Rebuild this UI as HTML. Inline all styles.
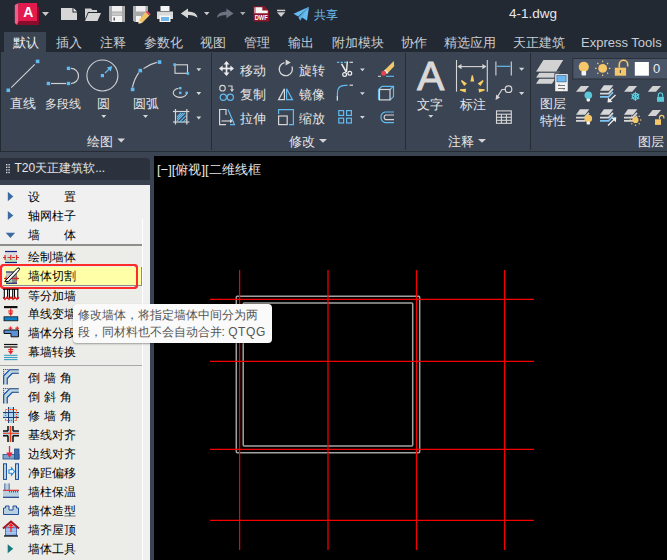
<!DOCTYPE html>
<html><head><meta charset="utf-8">
<style>
html,body{margin:0;padding:0}
body{width:667px;height:560px;overflow:hidden;position:relative;background:#222933;font-family:"Liberation Sans",sans-serif;}
.a{position:absolute}
.t{position:absolute;white-space:nowrap;line-height:1}
svg{position:absolute;overflow:visible}
.tab{position:absolute;top:36px;font-size:13px;color:#c8ccd2;line-height:1;white-space:nowrap}
.lbl{position:absolute;font-size:12.5px;color:#e6e6e6;line-height:1;white-space:nowrap}
.pl{position:absolute;font-size:12px;color:#000;font-weight:500;line-height:1;white-space:nowrap;left:28px}
.tri{position:absolute;width:0;height:0;border-left:2.5px solid transparent;border-right:2.5px solid transparent;border-top:3px solid #d0d3d8}
</style></head><body>

<!-- ===== TITLE BAR ===== -->
<div id="title">
<svg width="667" height="30" style="left:0;top:0">
 <!-- logo -->
 <rect x="17" y="7" width="22" height="18" fill="#8a0c2c"/>
 <polygon points="14.8,5 18.5,3 18.5,21 17,25 14.8,23" fill="#ef5f88"/>
 <rect x="18.5" y="3" width="18.5" height="18" fill="#e31a4d"/>
 <text x="28.2" y="17" font-family="Liberation Sans" font-weight="bold" font-size="14" fill="#fff" text-anchor="middle">A</text>
 <polygon points="42,12 49,12 45.5,16" fill="#c9c9c9"/>
 <!-- new -->
 <polygon points="61,8 72.5,8 72.5,12.5 77,12.5 77,20 61,20" fill="#d6d6d6"/>
 <polygon points="73.5,8 77,11.5 73.5,11.5" fill="#f2f2f2"/>
 <!-- open -->
 <polygon points="85,8.5 91,8.5 92.5,10 97,10 97,12 88,12 85,19" fill="#d0d0d0"/>
 <polygon points="88.5,13 101,13 97.5,21 85,21" fill="#d6d6d6"/>
 <!-- save -->
 <polygon points="109,6 125,6 125,22 110.5,22 109,20.5" fill="#a9a9a9"/>
 <rect x="112" y="6" width="10" height="5.5" fill="#efefef"/>
 <rect x="112" y="12.5" width="10" height="3" fill="#c9c9c9"/>
 <rect x="112" y="16" width="10" height="6" fill="#f5f5f5"/>
 <rect x="113.5" y="17.5" width="1.5" height="3" fill="#555"/>
 <!-- saveas -->
 <polygon points="133,6 148,6 148,13 141,22 134.5,22 133,20.5" fill="#a9a9a9"/>
 <rect x="136" y="6" width="9.5" height="5.5" fill="#efefef"/>
 <rect x="136" y="16" width="5" height="6" fill="#f5f5f5"/>
 <polygon points="145.5,12 149.5,15.5 142,23 138.5,23.5 139,20" fill="#f0c466"/>
 <polygon points="145.5,12 147,10.7 150.7,14.2 149.5,15.5" fill="#e84a5f"/>
 <polygon points="139,20 138.5,23.5 141.5,23" fill="#eee"/>
 <!-- print -->
 <rect x="160.5" y="6" width="9" height="5" fill="#f5f5f5"/>
 <rect x="157" y="11.5" width="16" height="7.5" fill="#d9d9d9"/>
 <rect x="159.5" y="15.5" width="11" height="6.5" fill="#f7f7f7"/>
 <rect x="161" y="17" width="8" height="4" fill="#73b6ea"/>
 <!-- undo -->
 <path d="M180.8,13.4 L188,8.6 L188,11.4 Q196.5,11.4 197.6,17.8 Q194.5,14.9 188,14.9 L188,18.2 Z" fill="#d6d6d6"/>
 <polygon points="204,12 209.5,12 206.75,15.2" fill="#c9c9c9"/>
 <!-- redo -->
 <path d="M233.6,13.4 L226.4,8.6 L226.4,11.4 Q217.9,11.4 216.8,17.8 Q219.9,14.9 226.4,14.9 L226.4,18.2 Z" fill="#6b7280"/>
 <polygon points="240,12 245.5,12 242.75,15.2" fill="#a9adb3"/>
 <!-- dwf -->
 <polygon points="253.5,6.3 264.5,6.3 269,10.8 269,21.6 253.5,21.6" fill="#8a1628"/>
 <polygon points="255.8,7.3 262.3,7.3 262.3,10.6 267.7,10.6 267.7,13.3 255.8,13.3" fill="#f6f6f6"/>
 <rect x="254.2" y="7.3" width="1.6" height="6" fill="#e8a0b0"/>
 <text x="261.2" y="19.8" font-family="Liberation Sans" font-weight="bold" font-size="7.6" fill="#fff" text-anchor="middle" textLength="13" lengthAdjust="spacingAndGlyphs">DWF</text>
 <!-- customize -->
 <rect x="277" y="9.7" width="8.2" height="1.5" fill="#cfcfcf"/>
 <polygon points="277,12.3 285.2,12.3 281.1,16.9" fill="#cfcfcf"/>
 <!-- plane -->
 <polygon points="293.5,13.8 309,6.8 298.2,16.6" fill="#66bcf2"/>
 <polygon points="300.6,16.4 309,6.8 307,20.8" fill="#66bcf2"/>
 <polygon points="298.4,17.2 308,7.6 300.2,20.8" fill="#5aaee6"/>
</svg>
<div class="t" style="left:314px;top:9px;font-size:12px;color:#6cbef2">共享</div>
<div class="t" style="left:509px;top:7px;font-size:13.5px;color:#e8e8e8">4-1.dwg</div>
</div>

<!-- ===== TABS ===== -->
<div class="a" style="left:4px;top:32px;width:42px;height:20px;background:#3b4453"></div>
<div class="tab" style="left:13px;color:#eef0f2">默认</div>
<div class="tab" style="left:56px">插入</div>
<div class="tab" style="left:100px">注释</div>
<div class="tab" style="left:144px">参数化</div>
<div class="tab" style="left:200px">视图</div>
<div class="tab" style="left:244px">管理</div>
<div class="tab" style="left:288px">输出</div>
<div class="tab" style="left:332px">附加模块</div>
<div class="tab" style="left:400.5px">协作</div>
<div class="tab" style="left:444px">精选应用</div>
<div class="tab" style="left:513px">天正建筑</div>
<div class="tab" style="left:581px">Express Tools</div>

<!-- ===== RIBBON ===== -->
<div class="a" style="left:1px;top:52px;width:666px;height:104px;background:#3b4453"></div>
<div class="a" style="left:1px;top:151px;width:666px;height:1px;background:#262c36"></div>
<div class="a" style="left:211px;top:53px;width:1px;height:97px;background:#262c36"></div>
<div class="a" style="left:405px;top:53px;width:1px;height:97px;background:#262c36"></div>
<div class="a" style="left:530px;top:53px;width:1px;height:97px;background:#262c36"></div>

<div id="ribbon">
<svg width="667" height="160" style="left:0;top:0" fill="none">
 <g stroke="#cfd1d4" stroke-width="1.2">
  <line x1="11.2" y1="87.6" x2="34.8" y2="64.3" stroke-width="1.1"/>
  <line x1="51" y1="83.5" x2="66" y2="83.5"/>
  <path d="M71,68.4 A7.55,7.55 0 0 1 71,83.5"/>
  <circle cx="102.4" cy="75.5" r="15.5" stroke-width="1.1"/>
  <path d="M132.4,87.3 Q134.5,78.5 138.8,72.6" /><path d="M143.5,68.6 Q149,64.2 156.8,62.3"/>
 </g>
 <g fill="#62bbf0">
  <rect x="6.5" y="88.5" width="3.6" height="3.6"/>
  <rect x="35.8" y="59.6" width="3.6" height="3.6"/>
  <rect x="46.7" y="81.8" width="3.4" height="3.4"/>
  <rect x="66.8" y="81.8" width="3.4" height="3.4"/>
  <rect x="66.8" y="66.7" width="3.4" height="3.4"/>
  <rect x="100.8" y="74" width="3.2" height="3.2"/>
  <rect x="130.8" y="87.6" width="3.6" height="3.6"/>
  <rect x="138.5" y="68.8" width="3.6" height="3.6"/>
  <rect x="157.7" y="60.3" width="3.6" height="3.6"/>
 </g>
 <line x1="105" y1="73" x2="109.6" y2="68.6" stroke="#62bbf0" stroke-width="1.3"/>
 <polygon points="112.4,66 106.8,67.6 110.7,71.5" fill="#62bbf0"/>
 <!-- small draw icons -->
 <rect x="175" y="64.8" width="12.5" height="8.5" stroke="#d6d6d6" stroke-width="1.1"/>
 <rect x="173.3" y="63.3" width="2.6" height="2.6" fill="#62bbf0"/>
 <rect x="186.6" y="72.2" width="2.6" height="2.6" fill="#62bbf0"/>
 <path d="M178.5,88.3 A6.8,4.6 0 1 0 186.8,92.3" fill="none" stroke="#d6d6d6" stroke-width="1.1"/>
 <rect x="179" y="86.9" width="2.5" height="2.5" fill="#62bbf0"/>
 <rect x="179" y="91.6" width="2.5" height="2.5" fill="#62bbf0"/>
 <rect x="185.4" y="91.6" width="2.5" height="2.5" fill="#62bbf0"/>
 <g stroke="#d6d6d6" stroke-width="1.2">
  <line x1="173" y1="111.5" x2="189.3" y2="111.5"/>
  <line x1="173" y1="122" x2="189.3" y2="122"/>
  <line x1="175.5" y1="109" x2="175.5" y2="124.5"/>
  <line x1="186.8" y1="109" x2="186.8" y2="124.5"/>
 </g>
 <g stroke="#62bbf0" stroke-width="1.1"><line x1="177" y1="117" x2="181" y2="113"/><line x1="177" y1="121" x2="185" y2="113"/><line x1="179" y1="122.6" x2="186" y2="115.6"/><line x1="182.5" y1="122.6" x2="186" y2="119.1"/><line x1="177" y1="119" x2="183" y2="113"/></g>
 <g fill="#d3d5d8">
  <polygon points="196.4,68.2 201.2,68.2 198.8,71.2"/>
  <polygon points="196.4,92 201.2,92 198.8,95"/>
  <polygon points="196.4,116.4 201.2,116.4 198.8,119.4"/>
  <polygon points="101.3,115 106.3,115 103.8,118"/>
  <polygon points="143,115 148,115 145.5,118"/>
  <polygon points="117.4,138.6 125,138.6 121.2,142.4"/>
  <polygon points="360,68.5 364.8,68.5 362.4,71.3"/>
  <polygon points="360,92.2 364.8,92.2 362.4,95"/>
  <polygon points="360,116 364.8,116 362.4,118.8"/>
  <polygon points="319,139 327,139 323,142.8"/>
  <polygon points="428.3,115 433.3,115 430.8,117.8"/>
  <polygon points="519,67.8 524.3,67.8 521.6,70.8"/>
  <polygon points="519,91.9 524.3,91.9 521.6,94.9"/>
  <polygon points="478,139 486,139 482,142.8"/>
 </g>
 <!-- modify icons -->
 <g stroke="#ececec" stroke-width="1.7"><line x1="222" y1="68.5" x2="231" y2="68.5"/><line x1="226.5" y1="64" x2="226.5" y2="73"/></g>
 <g fill="#ececec">
  <polygon points="226.5,61 229.5,64.6 223.5,64.6"/><polygon points="226.5,76 229.5,72.4 223.5,72.4"/>
  <polygon points="219,68.5 222.6,65.5 222.6,71.5"/><polygon points="234,68.5 230.4,65.5 230.4,71.5"/>
 </g>
 <circle cx="222.5" cy="88.2" r="2.8" fill="none" stroke="#d6d6d6" stroke-width="1.1"/>
 <path d="M228,86 L232,86 L232,89.5" fill="none" stroke="#d6d6d6" stroke-width="1.2"/>
 <polygon points="229.9,89.2 234.1,89.2 232,92" fill="#d6d6d6"/>
 <g stroke="#62bbf0" stroke-width="1.2" fill="none"><circle cx="223.3" cy="97.3" r="3.1"/><circle cx="230.3" cy="97.3" r="3.1"/></g>
 <g stroke="#d6d6d6" stroke-width="1.2">
  <polyline points="226,124.6 219.6,124.6 219.6,109.5 226,109.5 226,115"/>
  <line x1="221.5" y1="121" x2="230" y2="121"/>
 </g>
 <polygon points="230,118.8 233,121 230,123.2" fill="#d6d6d6"/>
 <polyline points="228,109.5 234.5,124.6 230,124.6" stroke="#62bbf0" stroke-width="1.2"/>
 <path d="M284.5,62.6 A6.6,6.6 0 1 0 291.9,66.5" fill="none" stroke="#d6d6d6" stroke-width="1.3"/>
 <polygon points="290.8,62.6 285.6,59.6 285.6,65.6" fill="#d6d6d6"/>
 <polygon points="278.6,99.6 284.4,88.8 284.4,99.6" stroke="#d6d6d6" stroke-width="1.2" stroke-linejoin="miter"/>
 <polygon points="286.6,88.8 292.5,99.6 286.6,99.6" stroke="#62bbf0" stroke-width="1.2"/>
 <rect x="278.6" y="116" width="8.6" height="8.6" stroke="#d6d6d6" stroke-width="1.2"/>
 <polyline points="278.6,114 278.6,109.6 293.4,109.6 293.4,124.6 289,124.6" stroke="#62bbf0" stroke-width="1.2"/>
 <!-- trim -->
 <line x1="337" y1="62.3" x2="348" y2="62.3" stroke="#62bbf0" stroke-width="1.2" stroke-dasharray="2.2,1.4"/>
 <line x1="349.5" y1="62.3" x2="353" y2="62.3" stroke="#d6d6d6" stroke-width="1.2"/>
 <g fill="#eeeeee"><polygon points="340.8,64 342.3,63.6 347,71.8 345.6,72.6"/><polygon points="346.6,61.5 348,61.5 347.2,72 345.8,72"/></g>
 <g stroke="#eeeeee" stroke-width="1.2" fill="none"><circle cx="344.6" cy="74.5" r="1.9"/><circle cx="349.8" cy="73.3" r="1.9"/></g>
 <!-- erase -->
 <polygon points="384.5,70.3 393.8,61 394.2,66.2 387.5,73.3" fill="#f2c86c"/>
 <polygon points="383.8,71 385.2,69.6 388.3,72.7 386.9,74" fill="#f4f4f4"/>
 <circle cx="383.7" cy="73.2" r="2.5" fill="#e8424f"/>
 <line x1="378" y1="76.3" x2="381" y2="76.3" stroke="#d6d6d6" stroke-width="1.1"/>
 <line x1="386" y1="76.3" x2="394" y2="76.3" stroke="#62bbf0" stroke-width="1.1"/>
 <!-- fillet -->
 <path d="M337.4,100.6 L337.4,93 Q337.4,85.4 345,85.4 L347.5,85.4" stroke="#62bbf0" stroke-width="1.2"/>
 <line x1="349.5" y1="85.2" x2="353" y2="85.2" stroke="#d6d6d6" stroke-width="1.2"/>
 <line x1="337.4" y1="96" x2="337.4" y2="100.6" stroke="#d6d6d6" stroke-width="1.2"/>
 <!-- 3d box -->
 <g stroke="#62bbf0" stroke-width="1.2">
  <polyline points="378.5,89.5 382,86.3 393.5,86.3 393.5,96.6 390,100"/>
  <line x1="390" y1="89.5" x2="393.5" y2="86.3"/>
  <line x1="378.5" y1="89.5" x2="378.5" y2="99.9"/>
 </g>
 <rect x="379.5" y="89.5" width="10.5" height="10.4" stroke="#d6d6d6" stroke-width="1.2"/>
 <!-- array -->
 <g stroke="#62bbf0" stroke-width="1.2">
  <rect x="338.8" y="110.6" width="4.8" height="4.8"/><rect x="346.6" y="110.6" width="4.8" height="4.8"/>
  <rect x="338.8" y="118.2" width="4.8" height="4.8"/><rect x="346.6" y="118.2" width="4.8" height="4.8"/>
 </g>
 <!-- offset -->
 <path d="M394,112 L385,112 A5.5,5.5 0 0 0 385,122.6 L394,122.6" stroke="#62bbf0" stroke-width="1.2"/>
 <path d="M394,115 L385.5,115 A2.6,2.6 0 0 0 385.5,119.6 L394,119.6" stroke="#d6d6d6" stroke-width="1.2"/>
 <!-- annotate -->
 <g stroke="#d6d6d6" stroke-width="1.1">
  <line x1="456.5" y1="60" x2="456.5" y2="91.7"/><line x1="487.3" y1="60" x2="487.3" y2="91.7"/>
  <line x1="459" y1="66.6" x2="485" y2="66.6"/>
 </g>
 <polygon points="457.3,66.6 461.5,64 461.5,69.2" fill="#d6d6d6"/>
 <polygon points="486.5,66.6 482.3,64 482.3,69.2" fill="#d6d6d6"/>
 <g fill="#f7cd64"><polygon points="472.9,75.3 471.7,75.3 470.4,81.5 474.2,81.5"/><polygon points="461.8,80.1 460.9,81.0 464.2,86.1 466.9,83.4"/><polygon points="483.7,81.0 482.8,80.1 477.7,83.4 480.4,86.1"/><polygon points="460.0,89.2 459.8,90.4 465.6,92.5 466.1,88.7"/><polygon points="484.8,90.4 484.6,89.2 478.5,88.7 479.0,92.5"/></g>
 <g stroke="#d6d6d6" stroke-width="1.1">
  <line x1="495.9" y1="61.4" x2="495.9" y2="75.5"/><line x1="511.3" y1="61.4" x2="511.3" y2="75.5"/>
 </g>
 <line x1="497" y1="66.3" x2="510.2" y2="66.3" stroke="#62bbf0" stroke-width="1.2"/>
 <circle cx="508.5" cy="89.2" r="3.3" stroke="#d6d6d6" stroke-width="1.2"/>
 <polyline points="505.5,89.5 502,89.5 497,97.5" stroke="#d6d6d6" stroke-width="1.2"/>
 <polygon points="495.6,99.9 496.2,94.6 500,97.4" fill="#d6d6d6"/>
 <g stroke="#d6d6d6" stroke-width="1.1">
  <rect x="496.5" y="110.9" width="14.8" height="12.4"/>
  <line x1="496.5" y1="114.2" x2="511.3" y2="114.2"/><line x1="496.5" y1="117.3" x2="511.3" y2="117.3"/><line x1="496.5" y1="120.3" x2="511.3" y2="120.3"/>
  <line x1="501.4" y1="114.2" x2="501.4" y2="123.3"/><line x1="506.4" y1="114.2" x2="506.4" y2="123.3"/>
 </g>
</svg>
<div class="t" style="left:417px;top:56px;font-size:41px;color:#d9d9d9;-webkit-text-stroke:0.9px #d9d9d9">A</div>
<div class="lbl" style="left:10px;top:98px">直线</div>
<div class="lbl" style="left:45px;top:98px;font-size:12px">多段线</div>
<div class="lbl" style="left:97px;top:98px">圆</div>
<div class="lbl" style="left:133px;top:98px">圆弧</div>
<div class="lbl" style="left:87px;top:136px">绘图</div>
<div class="lbl" style="left:240px;top:64.5px">移动</div>
<div class="lbl" style="left:240px;top:88.5px">复制</div>
<div class="lbl" style="left:240px;top:112.5px">拉伸</div>
<div class="lbl" style="left:299px;top:64.5px">旋转</div>
<div class="lbl" style="left:299px;top:88.5px">镜像</div>
<div class="lbl" style="left:299px;top:112.5px">缩放</div>
<div class="lbl" style="left:289px;top:136px">修改</div>
<div class="lbl" style="left:417px;top:99px">文字</div>
<div class="lbl" style="left:460px;top:99px">标注</div>
<div class="lbl" style="left:448px;top:136px">注释</div>
<svg width="667" height="160" style="left:0;top:0">
 <!-- layer properties -->
 <g fill="#d2d2d2">
  <polygon points="536,83.8 540,77.8 556,77.8 552,83.8"/>
  <polygon points="536,77.8 540,71.8 560,71.8 556,77.8" />
  <polygon points="536,71.7 543.4,60.1 563.2,60.1 556.1,71.7"/>
 </g>
 <g stroke="#3b4453" stroke-width="1"><line x1="536" y1="72.3" x2="560" y2="72.3"/><line x1="536" y1="78.3" x2="556" y2="78.3"/></g>
 <rect x="554.8" y="73.7" width="13.4" height="18.1" fill="#f2f2f2" stroke="#2a303a" stroke-width="0.8"/>
 <rect x="556.9" y="75.5" width="9.2" height="6.4" fill="#6ab6f0" stroke="#2a5a8a" stroke-width="0.6"/>
 <g stroke="#555" stroke-width="0.8" fill="none"><path d="M558,85.5 L565,85.5 M558,85.5 L559.5,84.3"/><path d="M558,88.5 L565,88.5 M565,88.5 L563.5,89.7"/></g>
 <!-- combo -->
 <rect x="572.8" y="58.5" width="96" height="20.5" fill="#4c5669" stroke="#2b313b" stroke-width="1"/>
 <circle cx="583.8" cy="66.8" r="5.1" fill="#f6c768"/>
 <rect x="581.5" y="71" width="4.6" height="4.6" fill="#f4f4f4" rx="1"/>
 <g stroke="#f6c768" stroke-width="1.2">
  <line x1="602.7" y1="60.7" x2="602.7" y2="62.3"/><line x1="602.7" y1="74.5" x2="602.7" y2="76.1"/>
  <line x1="595" y1="68.4" x2="596.6" y2="68.4"/><line x1="608.8" y1="68.4" x2="610.4" y2="68.4"/>
  <line x1="597.3" y1="63" x2="598.4" y2="64.1"/><line x1="607" y1="72.7" x2="608.1" y2="73.8"/>
  <line x1="597.3" y1="73.8" x2="598.4" y2="72.7"/><line x1="607" y1="64.1" x2="608.1" y2="63"/>
 </g>
 <circle cx="602.7" cy="68.4" r="4.4" fill="#f6c768"/>
 <rect x="614.8" y="67.7" width="11.3" height="8" fill="#f6c768"/>
 <rect x="619.8" y="70" width="1.2" height="3" fill="#4c5669"/>
 <path d="M619.3,67.7 L619.3,64.5 A4.2,4.2 0 0 1 627.7,64.5 L627.7,66.5" fill="none" stroke="#f6c768" stroke-width="1.6"/>
 <rect x="634.8" y="62" width="14.1" height="13.7" fill="#fff"/>
 <!-- row2 -->
 <g fill="#d2d2d2">
  <polygon points="576,91.8 580.8,86 589.2,86 584.4,91.8"/>
  <polygon points="624.1,91.8 628.8,86 637.1,86 632.2,91.8"/>
  <polygon points="647.8,91.8 652.6,86 661,86 656,91.8"/>
  <polygon points="647.8,115.9 652.6,110 661,110 656,115.9"/>
  
  
  
  
 </g>

 <circle cx="588.3" cy="95.3" r="3.8" fill="#5ac8d8"/>
 <rect x="586.6" y="98.4" width="3.4" height="3" fill="#f0f0f0" rx="0.8"/>
 <polygon points="576.0,114.7 579.9,109.3 589.3,109.3 585.2,114.7" fill="#d8d8d8"/>
 <polyline points="576.0,117.6 584.6,117.6 589.0,112.9" fill="none" stroke="#d8d8d8" stroke-width="1.7"/>
 <polyline points="576.0,120.9 584.6,120.9 589.0,116.2" fill="none" stroke="#d8d8d8" stroke-width="1.7"/>
 <circle cx="588.3" cy="118.5" r="3.8" fill="#f6c768"/>
 <rect x="586.6" y="121.6" width="3.4" height="3" fill="#f0f0f0" rx="0.8"/>
 <polygon points="600.0,90.7 603.9,85.3 613.3,85.3 609.2,90.7" fill="#d8d8d8"/>
 <polyline points="600.0,93.6 608.6,93.6 613.0,88.9" fill="none" stroke="#d8d8d8" stroke-width="1.7"/>
 <polyline points="600.0,96.9 608.6,96.9 613.0,92.2" fill="none" stroke="#7ec4f4" stroke-width="1.7"/>
 <polygon points="600.0,114.7 603.9,109.3 613.3,109.3 609.2,114.7" fill="#d8d8d8"/>
 <polyline points="600.0,117.6 608.6,117.6 613.0,112.9" fill="none" stroke="#d8d8d8" stroke-width="1.7"/>
 <polyline points="600.0,120.9 608.6,120.9 613.0,116.2" fill="none" stroke="#7ec4f4" stroke-width="1.7"/>
 <polygon points="624.0,114.7 627.9,109.3 637.3,109.3 633.2,114.7" fill="#d8d8d8"/>
 <polyline points="624.0,117.6 632.6,117.6 637.0,112.9" fill="none" stroke="#d8d8d8" stroke-width="1.7"/>
 <polyline points="624.0,120.9 632.6,120.9 637.0,116.2" fill="none" stroke="#d8d8d8" stroke-width="1.7"/>
 <g stroke="#5cd0e0" stroke-width="1.1" fill="none"><line x1="635.40" y1="96.40" x2="635.40" y2="91.80"/><line x1="635.40" y1="96.40" x2="631.42" y2="94.10"/><line x1="635.40" y1="96.40" x2="631.42" y2="98.70"/><line x1="635.40" y1="96.40" x2="635.40" y2="101.00"/><line x1="635.40" y1="96.40" x2="639.38" y2="98.70"/><line x1="635.40" y1="96.40" x2="639.38" y2="94.10"/><polygon points="638.60,96.40 637.00,93.63 633.80,93.63 632.20,96.40 633.80,99.17 637.00,99.17"/></g>
 <circle cx="635.5" cy="120" r="3.1" fill="#f6c768"/>
 <g fill="#f6c768"><circle cx="640.70" cy="120.00" r="0.75"/><circle cx="639.18" cy="116.32" r="0.75"/><circle cx="635.50" cy="114.80" r="0.75"/><circle cx="631.82" cy="116.32" r="0.75"/><circle cx="630.30" cy="120.00" r="0.75"/><circle cx="631.82" cy="123.68" r="0.75"/><circle cx="635.50" cy="125.20" r="0.75"/><circle cx="639.18" cy="123.68" r="0.75"/></g>
 <g stroke="#f0f0f0" stroke-width="1.3">
  <line x1="615.5" y1="95" x2="609" y2="101"/><line x1="608" y1="125.5" x2="614.5" y2="119"/>
 </g>
 <polygon points="607.5,102.5 608,97.5 612.5,102" fill="#f0f0f0"/>
 <polygon points="616.3,117.2 611.3,117.7 615.8,122.2" fill="#f0f0f0"/>
 <rect x="657" y="96.8" width="7" height="5" fill="#5ac8d8"/>
 <path d="M658.4,96.8 L658.4,95 A2.1,2.1 0 0 1 662.6,95 L662.6,96.8" fill="none" stroke="#5ac8d8" stroke-width="1.2"/>
 <rect x="655" y="119.3" width="6" height="5.6" fill="#f6c768"/>
 <path d="M659.5,119.3 L659.5,117.5 A2.2,2.2 0 0 1 663.9,117.5 L663.9,118.5" fill="none" stroke="#f6c768" stroke-width="1.2"/>
</svg>
<div class="t" style="left:653px;top:62px;font-size:13px;color:#e8ecf4">0</div>
<div class="lbl" style="left:540px;top:98px">图层</div>
<div class="lbl" style="left:540px;top:115px">特性</div>
<div class="lbl" style="left:638px;top:136px">图层</div>
</div>

<!-- ===== CANVAS ===== -->
<div class="a" style="left:150px;top:152px;width:4px;height:408px;background:#3b4453"></div>
<div class="a" style="left:154px;top:156px;width:513px;height:404px;background:#000"></div>
<div id="canvas">
<svg width="667" height="560" style="left:0;top:0" fill="none">
 <g stroke="#a2a2a2" stroke-width="1.5">
  <rect x="236.3" y="296.2" width="183.4" height="156.5" rx="1"/>
  <rect x="243.2" y="303" width="169.5" height="143" rx="1"/>
 </g>
 <g stroke="#f40000" stroke-width="1.25">
  <line x1="239.6" y1="270" x2="239.6" y2="550"/>
  <line x1="328" y1="270" x2="328" y2="550"/>
  <line x1="416.5" y1="270" x2="416.5" y2="550"/>
  <line x1="504.6" y1="270" x2="504.6" y2="550"/>
  <line x1="210" y1="299.4" x2="534" y2="299.4"/>
  <line x1="210" y1="361.4" x2="534" y2="361.4"/>
  <line x1="210" y1="449.3" x2="534" y2="449.3"/>
  <line x1="210" y1="520.3" x2="534" y2="520.3"/>
 </g>
</svg>
<div class="t" style="left:157px;top:163px;font-size:13px;color:#e6e6e6">[−][俯视][二维线框</div>
</div>

<!-- ===== PALETTE ===== -->
<div class="a" style="left:0;top:152px;width:154px;height:408px;background:#3b4453"></div>
<div class="a" style="left:0;top:158px;width:150px;height:22px;background:#2c323d;border-radius:0 4px 0 0"></div>
<div class="a" style="left:0;top:180px;width:150px;height:10px;background:#394150;border-radius:0 4px 0 0"></div>
<div class="a" style="left:0;top:185px;width:150px;height:375px;background:#f0f0f0"></div>
<div id="palette">
<svg width="150" height="560" style="left:0;top:0">
 <g fill="#d5d8dc">
  <rect x="6" y="164" width="1.4" height="1.4"/><rect x="8.4" y="164" width="1.4" height="1.4"/>
  <rect x="6" y="166.6" width="1.4" height="1.4"/><rect x="8.4" y="166.6" width="1.4" height="1.4"/>
  <rect x="6" y="169.2" width="1.4" height="1.4"/><rect x="8.4" y="169.2" width="1.4" height="1.4"/>
  <rect x="6" y="171.8" width="1.4" height="1.4"/><rect x="8.4" y="171.8" width="1.4" height="1.4"/>
 </g>
</svg>
<div class="t" style="left:14.5px;top:162px;font-size:12px;color:#e4e6e8">T20天正建筑软...</div>
<div class="a" style="left:0;top:246px;width:142px;height:314px;background:#ecece8"></div>
<div class="a" style="left:142px;top:219px;width:1px;height:341px;background:#fff"></div>
<div class="a" style="left:0;top:244px;width:142px;height:2px;background:#8e8e8e"></div>
<div class="a" style="left:0;top:365px;width:142px;height:1px;background:#a8a8a8"></div>
<div class="a" style="left:0px;top:264.2px;width:138px;height:24.6px;border:2px solid #ff2b2b;border-radius:4px;box-sizing:border-box"></div>
<div class="a" style="left:3px;top:267px;width:138.6px;height:18.6px;background:#ffffa8;border-right:1px solid #8c8c8c;border-bottom:1px solid #8c8c8c;box-sizing:border-box"></div>
<div class="a" style="left:0px;top:264.2px;width:138px;height:24.6px;border:2px solid #ff2b2b;border-radius:4px;box-sizing:border-box"></div>
<svg width="150" height="560" style="left:0;top:0">
 <g fill="#3a6aa2">
  <polygon points="7.8,191.8 13.3,196.5 7.8,201.2"/>
  <polygon points="7.8,210.9 13.3,215.5 7.8,220.1"/>
  <polygon points="5.7,232.8 15.1,232.8 10.4,238"/>
 </g>
 <polygon points="7.7,544.3 13.2,548.8 7.7,553.3" fill="#17787e"/>
 <!-- 绘制墙体 -->
 <rect x="5" y="252" width="12" height="6" fill="#dadada"/>
 <rect x="5" y="258.5" width="12" height="3.5" fill="#b6dcb8"/>
 <g stroke="#1a237e" stroke-width="1.2"><line x1="5" y1="251.5" x2="17" y2="251.5"/><line x1="5" y1="262.5" x2="17" y2="262.5"/></g>
 <g stroke="#d42a2a" stroke-width="1.2"><line x1="3" y1="257.5" x2="19" y2="257.5" stroke-dasharray="3,1.5"/><line x1="5" y1="255" x2="5" y2="260"/><line x1="10.8" y1="255" x2="10.8" y2="260"/><line x1="16.6" y1="255" x2="16.6" y2="260"/></g>
 <!-- 墙体切割 -->
 <rect x="6" y="272.5" width="11" height="10.5" fill="#c4c4c4"/>
 <rect x="12" y="273" width="5" height="10" fill="#8a8a8a"/>
 <rect x="6" y="280" width="6" height="2.6" fill="#a8d8a8"/>
 <g stroke="#1a237e" stroke-width="1.2"><line x1="6" y1="272" x2="17" y2="272"/><line x1="6" y1="283.3" x2="17" y2="283.3"/></g>
 <g stroke="#d42a2a" stroke-width="1.1"><line x1="4" y1="278.5" x2="19" y2="278.5"/><line x1="6" y1="276.5" x2="6" y2="280.5"/><line x1="16.8" y1="276.5" x2="16.8" y2="280.5"/></g>
 <path d="M4.6,281.6 L15.6,270 L17.6,268 Q19.8,267.2 19.5,269.6 L17.2,272.4 L8.2,281.6 Z" fill="#fff" stroke="#000" stroke-width="1"/>
 <!-- 等分加墙 -->
 <rect x="3.5" y="289" width="15" height="10" fill="#fff"/>
 <g stroke="#000" stroke-width="1.1"><line x1="3" y1="289.2" x2="18.5" y2="289.2"/>
  <line x1="4.3" y1="289" x2="4.3" y2="299"/><line x1="7.6" y1="289" x2="7.6" y2="299"/><line x1="9.4" y1="289" x2="9.4" y2="299"/><line x1="12.7" y1="289" x2="12.7" y2="299"/><line x1="14.5" y1="289" x2="14.5" y2="299"/><line x1="17.8" y1="289" x2="17.8" y2="299"/></g>
 <path d="M3,297 L5,299.5 L7,297 L9,299.5 L11,297 L13,299.5 L15,297 L17,299.5 L19,297" fill="none" stroke="#e01818" stroke-width="1.1"/>
 <line x1="3" y1="298.3" x2="19" y2="298.3" stroke="#e01818" stroke-width="0.9"/>
 <!-- 单线变墙 -->
 <rect x="4" y="306" width="13.5" height="2.2" fill="#111"/>
 <line x1="10.7" y1="308.5" x2="10.7" y2="313" stroke="#e82828" stroke-width="1.3"/>
 <line x1="8.2" y1="311" x2="13.2" y2="311" stroke="#e82828" stroke-width="1.2"/>
 <polygon points="8,312.5 13.4,312.5 10.7,316" fill="#e82828"/>
 <rect x="4" y="316.8" width="13.8" height="4" fill="#1280c8" stroke="#111" stroke-width="0.8"/>
 <!-- 墙体分段 -->
 <g stroke="#e82828" stroke-width="1.2"><line x1="10.5" y1="326.5" x2="10.5" y2="331"/><line x1="8.6" y1="328.2" x2="12.4" y2="328.2"/><line x1="17.2" y1="326.5" x2="17.2" y2="331"/><line x1="15.3" y1="328.2" x2="19" y2="328.2"/></g>
 <polygon points="4,330 18.5,330 18.5,336.8 11,336.8 11,333.5 4,333.5" fill="#5b8fd6" stroke="#111" stroke-width="1"/>
 <!-- 幕墙转换 -->
 <g stroke="#111" stroke-width="1.2"><line x1="4" y1="344.5" x2="17.5" y2="344.5"/><line x1="4" y1="347" x2="17.5" y2="347"/></g>
 <line x1="10.7" y1="347.5" x2="10.7" y2="351.5" stroke="#e82828" stroke-width="1.3"/>
 <line x1="8.2" y1="349.6" x2="13.2" y2="349.6" stroke="#e82828" stroke-width="1.2"/>
 <polygon points="8,351 13.4,351 10.7,354.5" fill="#e82828"/>
 <g stroke="#3aa0bf" stroke-width="1.1"><line x1="4" y1="355.3" x2="17.5" y2="355.3"/><line x1="4" y1="357.5" x2="17.5" y2="357.5"/><line x1="4" y1="359.6" x2="17.5" y2="359.6"/></g>
 <!-- 倒墙角 / 倒斜角 -->
 <g id="ch">
 <polygon points="3.5,384.5 3.5,375.8 9.8,369.5 18.8,369.5 18.8,373.5 12.3,373.5 7.4,378.5 7.4,384.5" fill="#bcd6e0"/>
 <polyline points="3.7,384.5 3.7,375.8 9.8,369.7 18.8,369.7" fill="none" stroke="#1c3f7c" stroke-width="1.1"/>
 <polyline points="7.2,384.5 7.2,378.5 12.3,373.3 18.8,373.3" fill="none" stroke="#1c3f7c" stroke-width="1.1"/>
 <line x1="4" y1="375.5" x2="9.8" y2="369.7" stroke="#1a6ae0" stroke-width="1"/>
 <line x1="7.5" y1="378.3" x2="12.3" y2="373.3" stroke="#1a6ae0" stroke-width="1"/>
 <g fill="#1c3f7c"><rect x="3.1" y="369" width="1.1" height="1.1"/><rect x="5.2" y="369" width="1.1" height="1.1"/><rect x="7.3" y="369" width="1.1" height="1.1"/><rect x="3.1" y="371.1" width="1.1" height="1.1"/><rect x="3.1" y="373.2" width="1.1" height="1.1"/></g>
 </g>
 <use href="#ch" y="19"/>
 <!-- 修墙角 -->
 <rect x="8.5" y="407" width="5" height="16" fill="#a8d4ec"/>
 <rect x="3" y="412.5" width="16" height="5" fill="#a8d4ec"/>
 <g stroke="#1f3f7a" stroke-width="1"><line x1="8.5" y1="407" x2="8.5" y2="423"/><line x1="13.5" y1="407" x2="13.5" y2="423"/><line x1="3" y1="412.5" x2="19" y2="412.5"/><line x1="3" y1="417.5" x2="19" y2="417.5"/></g>
 <rect x="5.5" y="409.5" width="11" height="11" fill="none" stroke="#f03c10" stroke-width="1.1" stroke-dasharray="1.2,1"/>
 <!-- 基线对齐 -->
 <rect x="8.2" y="426" width="4.6" height="16" fill="#a8d4ec"/>
 <rect x="3" y="431" width="16" height="4.6" fill="#a8d4ec"/>
 <g stroke="#000" stroke-width="1.4"><line x1="8" y1="426" x2="8" y2="431"/><line x1="3" y1="431" x2="8" y2="431"/><line x1="13" y1="426" x2="13" y2="431"/><line x1="13" y1="431" x2="19" y2="431"/><line x1="3" y1="435.8" x2="8" y2="435.8"/><line x1="8" y1="435.8" x2="8" y2="442"/><line x1="13" y1="435.8" x2="19" y2="435.8"/><line x1="13" y1="435.8" x2="13" y2="442"/></g>
 <g stroke="#f03a10" stroke-width="1.1"><line x1="10.5" y1="426" x2="10.5" y2="442"/><line x1="3" y1="433.3" x2="19" y2="433.3"/></g>
 <!-- 边线对齐 -->
 <rect x="3" y="454.5" width="16" height="4.5" fill="#7ea6cc" stroke="#1f4f8a" stroke-width="0.8"/>
 <rect x="14.5" y="449" width="4.5" height="10" fill="#3c6aa8" stroke="#1f4f8a" stroke-width="0.8"/>
 <line x1="9.5" y1="446" x2="9.5" y2="453" stroke="#e8284a" stroke-width="1.3"/>
 <polygon points="6.3,452.5 12.7,452.5 9.5,458" fill="#e8284a"/>
 <!-- 净距偏移 -->
 <g fill="#b8d0e0" stroke="#1f4f9a" stroke-width="1"><rect x="3.5" y="463.8" width="3" height="15.6"/><rect x="15.5" y="463.8" width="3" height="15.6"/></g>
 <polygon points="9,469.8 11.5,469.8 11.5,467.8 14.5,471.5 11.5,475.2 11.5,473.2 9,473.2" fill="#fff" stroke="#1a8ae8" stroke-width="1.1"/>
 <!-- 墙柱保温 -->
 <rect x="3" y="491" width="16" height="6" fill="#b8d0e0"/>
 <polyline points="5,483.6 5,490 " stroke="#1f3f8a" stroke-width="1.1"/>
 <polyline points="9,483.6 9,490" stroke="#1f3f8a" stroke-width="1.1"/>
 <rect x="5.5" y="483.6" width="3" height="7" fill="#b8d0e0"/>
 <line x1="3" y1="490.3" x2="19" y2="490.3" stroke="#d82020" stroke-width="1.1"/>
 <line x1="9" y1="491.8" x2="19" y2="491.8" stroke="#222" stroke-width="1" stroke-dasharray="1,1"/>
 <line x1="3" y1="497.3" x2="19" y2="497.3" stroke="#1f3f8a" stroke-width="1.2"/>
 <!-- 墙体造型 -->
 <path d="M3.5,514.5 L3.5,508 L5.5,508 L5.5,506 L9,506 L9,510 L13,510 L13,506 L16.5,506 L16.5,508 L18.5,508 L18.5,514.5 Z" fill="#b8d0e0" stroke="#1f4f9a" stroke-width="1"/>
 <!-- 墙齐屋顶 -->
 <rect x="5.5" y="527" width="11" height="8.5" fill="#8cb4e8" stroke="#2a4aa0" stroke-width="0.8"/>
 <g stroke="#c8dcf4" stroke-width="0.7"><line x1="5.5" y1="530" x2="16.5" y2="530"/><line x1="5.5" y1="532.8" x2="16.5" y2="532.8"/></g>
 <polyline points="3,528.5 11,521.5 19,528.5" fill="none" stroke="#a01828" stroke-width="2"/>
 <line x1="11" y1="525" x2="11" y2="532" stroke="#ff2020" stroke-width="1.3"/>
 <polygon points="8.3,526 13.7,526 11,522.8" fill="#ff2020"/>
 <line x1="8.5" y1="527.5" x2="13.5" y2="527.5" stroke="#ff2020" stroke-width="1"/>
 <line x1="4" y1="536" x2="18" y2="536" stroke="#222" stroke-width="1.4"/>
</svg>
<div class="pl" style="top:190.5px">设　　置</div>
<div class="pl" style="top:209.5px">轴网柱子</div>
<div class="pl" style="top:228.5px">墙　　体</div>
<div class="pl" style="top:251.1px">绘制墙体</div>
<div class="pl" style="top:270.0px">墙体切割</div>
<div class="pl" style="top:289.5px">等分加墙</div>
<div class="pl" style="top:308.0px">单线变墙</div>
<div class="pl" style="top:326.5px">墙体分段</div>
<div class="pl" style="top:345.5px">幕墙转换</div>
<div class="pl" style="left:27.7px;top:372.0px">倒</div>
<div class="pl" style="left:43.7px;top:372.0px">墙</div>
<div class="pl" style="left:59.7px;top:372.0px">角</div>
<div class="pl" style="left:27.7px;top:390.5px">倒</div>
<div class="pl" style="left:43.7px;top:390.5px">斜</div>
<div class="pl" style="left:59.7px;top:390.5px">角</div>
<div class="pl" style="left:27.7px;top:409.5px">修</div>
<div class="pl" style="left:43.7px;top:409.5px">墙</div>
<div class="pl" style="left:59.7px;top:409.5px">角</div>
<div class="pl" style="top:428.5px">基线对齐</div>
<div class="pl" style="top:447.5px">边线对齐</div>
<div class="pl" style="top:466.5px">净距偏移</div>
<div class="pl" style="top:485.5px">墙柱保温</div>
<div class="pl" style="top:504.5px">墙体造型</div>
<div class="pl" style="top:523.5px">墙齐屋顶</div>
<div class="pl" style="top:542.5px">墙体工具</div>
<div class="a" style="left:72.6px;top:304.2px;width:199.2px;height:38.4px;background:#fafafa;border-radius:4px;box-shadow:0 1px 2px rgba(0,0,0,.35);"></div>
<div class="t" style="left:77.5px;top:309px;font-size:12px;color:#555">修改墙体，将指定墙体中间分为两</div>
<div class="t" style="left:77.5px;top:326px;font-size:12px;color:#555">段，同材料也不会自动合并: <span style="letter-spacing:0.6px">QTQG</span></div>
</div>

</body></html>
